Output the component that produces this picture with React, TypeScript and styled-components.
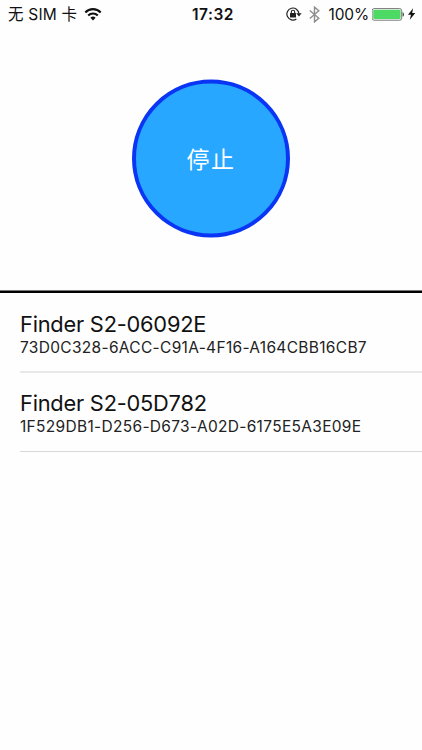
import React from 'react';
import styled, { createGlobalStyle } from 'styled-components';

const GlobalStyle = createGlobalStyle`
  * { box-sizing: border-box; }
  body {
    margin: 0;
    background: #fff;
    color: #111;
    font-family: Inter, "Noto Sans CJK SC", sans-serif;
  }
`;

const Screen = styled.main`
  display: flex;
  flex-direction: column;
  width: 422px;
  height: 750px;
  overflow: hidden;
  background: #fefefe;
`;

const StatusBar = styled.header`
  display: grid;
  grid-template-columns: 1fr auto 1fr;
  align-items: center;
  height: 28px;
  padding: 0 6px 0 8px;
`;

const StatusGroup = styled.div<{ $end?: boolean }>`
  display: flex;
  align-items: center;
  justify-content: ${(p) => (p.$end ? 'flex-end' : 'flex-start')};
`;

const StatusText = styled.span<{ $weight?: number; $spacing?: string; $left?: number }>`
  padding-top: 1px;
  margin-left: ${(p) => p.$left ?? 0}px;
  font-size: 15.5px;
  line-height: 27px;
  font-weight: ${(p) => p.$weight ?? 400};
  letter-spacing: ${(p) => p.$spacing ?? '0'};
  white-space: pre;
`;

const Icon = styled.svg<{ $left?: number }>`
  display: block;
  flex: none;
  margin-left: ${(p) => p.$left ?? 0}px;
`;

const Control = styled.section`
  display: flex;
  justify-content: center;
  align-items: flex-start;
  height: 262px;
  padding-top: 52px;
`;

const StopButton = styled.button`
  width: 158px;
  height: 158px;
  padding: 0 0 2px;
  border: 4px solid #0a35f5;
  border-radius: 50%;
  background: #27a7ff;
  color: #fff;
  font: 400 23px/1 "Noto Sans CJK SC", sans-serif;
  letter-spacing: 1.4px;
  transform: translateY(-0.5px);
`;

const DeviceList = styled.ul`
  margin: 0;
  padding: 0;
  list-style: none;
  border-top: 1px solid #777;
  box-shadow: inset 0 2px #000;
`;

const Device = styled.li`
  display: flex;
  flex-direction: column;
  height: 79px;
  margin-left: 20px;
  padding-top: 17px;
  border-bottom: 1px solid #d8d8d8;

  &:first-child {
    height: 82px;
    padding-top: 19px;
    border-bottom: 2px solid #e8e8e8;
  }

  &:last-child {
    padding-top: 16px;
  }
`;

const DeviceName = styled.span`
  font-size: 21.8px;
  line-height: 28px;
  letter-spacing: -0.22px;
`;

const DeviceId = styled.span`
  color: #222;
  font-size: 15.5px;
  line-height: 19px;
  letter-spacing: 0.31px;
`;

const devices = [
  { name: 'Finder S2-06092E', id: '73D0C328-6ACC-C91A-4F16-A164CBB16CB7' },
  { name: 'Finder S2-05D782', id: '1F529DB1-D256-D673-A02D-6175E5A3E09E' },
];

const WifiIcon = () => (
  <Icon $left={7} width="18" height="13" viewBox="0 0 18 13" fill="none" stroke="#111" strokeWidth="2.1">
    <path d="M1.3 4.4a10.8 10.8 0 0 1 15.4 0" />
    <path d="M4.2 7.5a6.8 6.8 0 0 1 9.6 0" />
    <path d="M9 12.4 6.4 9.8a3.7 3.7 0 0 1 5.2 0Z" fill="#111" stroke="none" />
  </Icon>
);

const RotationLockIcon = () => (
  <Icon width="16" height="14" viewBox="0 0 16 14" fill="none" stroke="#222">
    <path d="M12.9 6.6A6 6 0 1 0 10.4 11.9" strokeWidth="1.2" />
    <path d="M10.2 6.2h5.4L13 9.6Z" fill="#222" stroke="none" />
    <rect x="4" y="6" width="6" height="4.4" rx=".5" fill="#222" stroke="none" />
    <path d="M5.3 6.3V4.9a1.7 1.7 0 0 1 3.4 0v1.4" strokeWidth="1.1" />
  </Icon>
);

const BluetoothIcon = () => (
  <Icon $left={7} width="11" height="17" viewBox="0 0 11 17" fill="none" stroke="#8e8e8e" strokeWidth="1.4">
    <path d="m.8 4.5 9 7.8-4.3 3.6V1.1l4.3 3.6-9 7.8" />
  </Icon>
);

const BatteryIcon = () => (
  <Icon $left={3} width="34" height="13" viewBox="0 0 34 13">
    <rect x=".1" y=".6" width="29.6" height="11.6" rx="2" fill="#fff" stroke="#777" />
    <rect x="1.2" y="1.7" width="27.4" height="9.4" rx="1" fill="#4cd964" />
    <path d="M30.6 4.2c1.7.3 1.7 4.1 0 4.4Z" fill="#333" />
  </Icon>
);

const BoltIcon = () => (
  <Icon $left={2} width="8" height="12" viewBox="0 0 8 12">
    <path d="M5.1.2 0 6.8h3L1.8 11.8l5.5-6.9H4.2Z" fill="#111" />
  </Icon>
);

export default function App() {
  return (
    <>
      <GlobalStyle />
      <Screen>
        <StatusBar>
          <StatusGroup>
            <StatusText $spacing="0.2px">无 SIM 卡</StatusText>
            <WifiIcon />
          </StatusGroup>
          <StatusText $weight={600} $spacing="0.5px" $left={2}>17:32</StatusText>
          <StatusGroup $end>
            <RotationLockIcon />
            <BluetoothIcon />
            <StatusText $left={9} $spacing="-0.15px">100%</StatusText>
            <BatteryIcon />
            <BoltIcon />
          </StatusGroup>
        </StatusBar>
        <Control>
          <StopButton type="button">停止</StopButton>
        </Control>
        <DeviceList>
          {devices.map((device) => (
            <Device key={device.id}>
              <DeviceName>{device.name}</DeviceName>
              <DeviceId>{device.id}</DeviceId>
            </Device>
          ))}
        </DeviceList>
      </Screen>
    </>
  );
}
